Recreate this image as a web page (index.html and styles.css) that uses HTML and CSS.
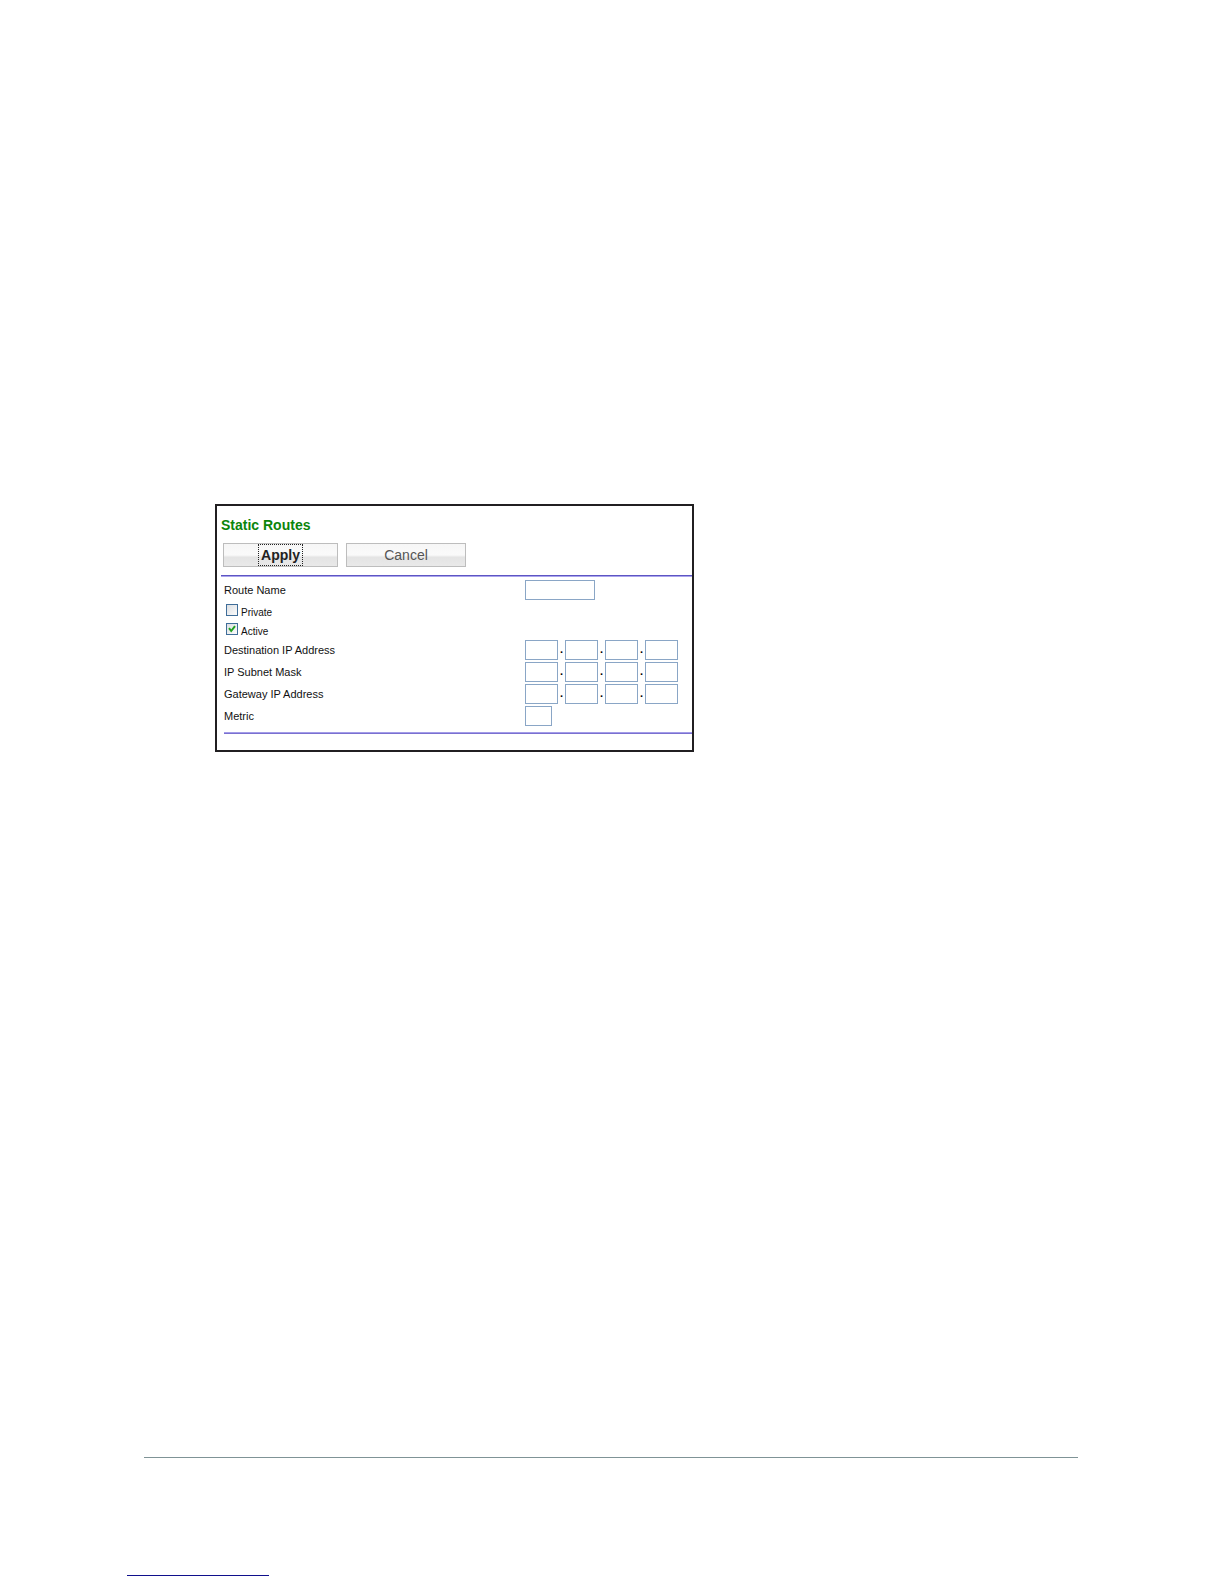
FILE: index.html
```html
<!DOCTYPE html>
<html lang="en">
<head>
<meta charset="utf-8">
<title>Static Routes</title>
<link rel="stylesheet" href="styles.css">
</head>
<body>
<main class="content">
  <form class="panel">
    <h1 class="title">Static Routes</h1>
    <div class="actions">
      <button class="button apply" type="submit"><span class="focus">Apply</span></button>
      <button class="button cancel" type="button">Cancel</button>
    </div>
    <hr class="rule">
    <div class="fields">
      <div class="row">
        <label for="name">Route Name</label>
        <input class="box wide" id="name" type="text">
      </div>
      <div class="option">
        <input class="check" id="private" type="checkbox">
        <label for="private">Private</label>
      </div>
      <div class="option">
        <input class="check" id="active" type="checkbox" checked>
        <label for="active">Active</label>
      </div>
      <div class="row">
        <label for="dest">Destination IP Address</label>
        <div class="address">
          <input class="box" id="dest" type="text"><span class="dot">.</span><input class="box" type="text" aria-label="Destination part 2"><span class="dot">.</span><input class="box" type="text" aria-label="Destination part 3"><span class="dot">.</span><input class="box" type="text" aria-label="Destination part 4">
        </div>
      </div>
      <div class="row">
        <label for="mask">IP Subnet Mask</label>
        <div class="address">
          <input class="box" id="mask" type="text"><span class="dot">.</span><input class="box" type="text" aria-label="Mask part 2"><span class="dot">.</span><input class="box" type="text" aria-label="Mask part 3"><span class="dot">.</span><input class="box" type="text" aria-label="Mask part 4">
        </div>
      </div>
      <div class="row">
        <label for="gateway">Gateway IP Address</label>
        <div class="address">
          <input class="box" id="gateway" type="text"><span class="dot">.</span><input class="box" type="text" aria-label="Gateway part 2"><span class="dot">.</span><input class="box" type="text" aria-label="Gateway part 3"><span class="dot">.</span><input class="box" type="text" aria-label="Gateway part 4">
        </div>
      </div>
      <div class="row">
        <label for="metric">Metric</label>
        <input class="box short" id="metric" type="text">
      </div>
    </div>
    <hr class="rule end">
  </form>
</main>
<footer class="footer">
  <hr class="footer-rule">
  <hr class="link-rule">
</footer>
</body>
</html>
```
FILE: styles.css
```css
* {
  box-sizing: border-box;
}

body {
  display: flex;
  flex-direction: column;
  min-height: 100vh;
  margin: 0;
  background: #fff;
  color: #111;
  font: 11px/14px "Liberation Sans", Arial, sans-serif;
}

.content {
  padding: 504px 16px 0 215px;
}

.panel {
  max-width: 479px;
  padding: 10px 0 16px 4px;
  border: 2px solid #211f21;
}

.title {
  margin: 0;
  color: #0b850b;
  font-size: 14px;
  line-height: 18px;
}

.actions {
  display: flex;
  gap: 8px;
  padding: 9px 2px 8px;
}

.button {
  display: flex;
  align-items: center;
  justify-content: center;
  height: 24px;
  padding: 0;
  border: 1px solid #bdbdbd;
  background: linear-gradient(#f6f6f6 0%, #fafafa 50%, #e4e4e4 60%, #e9e9e9 100%);
  font-family: inherit;
  font-size: 14px;
  line-height: 20px;
}

.apply {
  width: 115px;
  color: #222;
  font-weight: bold;
}

.cancel {
  width: 120px;
  color: #555;
}

.focus {
  padding: 0 2px;
  border: 1px dotted #222;
}

.rule {
  height: 2px;
  margin: 0;
  border: 0;
  background: linear-gradient(#5d55c3 50%, #aaa4ec 50%);
}

.end {
  margin: 5px 0 0 3px;
  background: linear-gradient(#a39ce8 50%, #7a70d0 50%);
}

.fields {
  padding: 2px 0 0 3px;
}

.row {
  display: grid;
  grid-template-columns: 301px 1fr;
  align-items: center;
  height: 22px;
}

.option {
  display: flex;
  align-items: baseline;
  gap: 3px;
  height: 19px;
  padding: 3px 0 0 2px;
  font-size: 10px;
  line-height: 12px;
}

.address {
  display: flex;
}

.box {
  width: 33px;
  height: 20px;
  padding: 0 2px;
  border: 1px solid #8aa6c6;
  background: #fff;
  font: inherit;
}

.wide {
  width: 70px;
}

.short {
  width: 27px;
}

.dot {
  width: 7px;
  color: #000;
  font-weight: bold;
  line-height: 18px;
  text-align: center;
}

.check {
  appearance: none;
  flex: none;
  width: 12px;
  height: 12px;
  margin: 0;
  border: 1px solid #3f6d99;
  background: linear-gradient(135deg, #dcdfe3, #fbfbfb);
}

.check:checked {
  background: url("data:image/svg+xml,%3Csvg xmlns='http://www.w3.org/2000/svg' viewBox='0 0 10 10'%3E%3Cpath d='M2 4.2L4.2 7L8 2.2' fill='none' stroke='%2321a121' stroke-width='2'/%3E%3C/svg%3E"), linear-gradient(135deg, #dcdfe3, #fbfbfb);
}

.footer {
  margin-top: auto;
  padding: 0 146px 8px 127px;
}

.footer-rule {
  height: 1px;
  margin: 0 0 117px 17px;
  border: 0;
  background: #7f9396;
}

.link-rule {
  width: 142px;
  height: 1px;
  margin: 0;
  border: 0;
  background: #10108c;
}
```
